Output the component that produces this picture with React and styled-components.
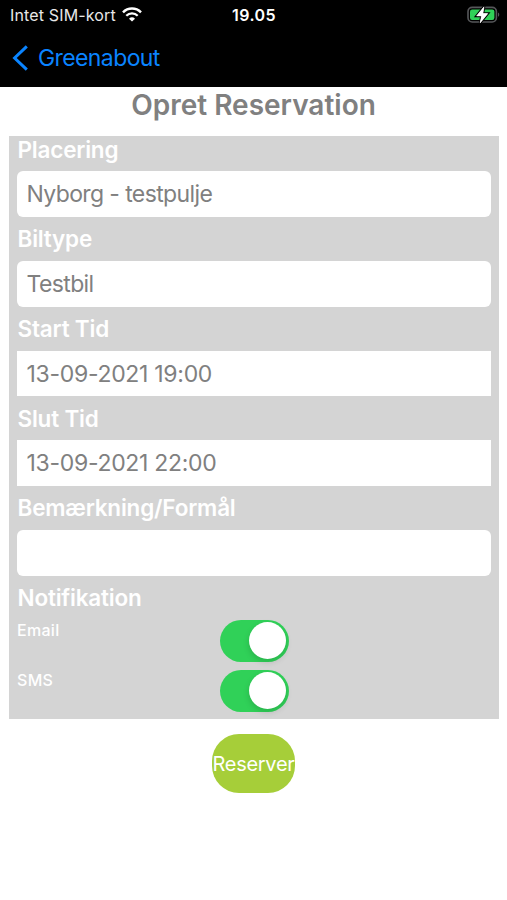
import React, { useState } from "react";
import styled, { createGlobalStyle } from "styled-components";

const fields = [
  { label: "Placering", value: "Nyborg - testpulje", rounded: true },
  { label: "Biltype", value: "Testbil", rounded: true },
  { label: "Start Tid", value: "13-09-2021 19:00", rounded: false },
  { label: "Slut Tid", value: "13-09-2021 22:00", rounded: false },
  { label: "Bemærkning/Formål", value: "", rounded: true },
];

function WifiIcon() {
  return (
    <svg width="20" height="15" viewBox="0 0 20 15" fill="none">
      <path d="M1 5.3a12.8 12.8 0 0 1 18 0" stroke="#fff" strokeWidth="2.5" />
      <path d="M4.3 8.8a8.1 8.1 0 0 1 11.4 0" stroke="#fff" strokeWidth="2.3" />
      <path d="M10 14.6 7 11.7a4.3 4.3 0 0 1 6 0z" fill="#fff" />
    </svg>
  );
}

function BatteryIcon() {
  return (
    <svg width="34" height="18" viewBox="0 0 34 18" fill="none">
      <rect x="2" y="1.4" width="28.4" height="14.6" rx="4.2" stroke="#56575a" strokeWidth="1.6" />
      <path d="M32 6.6c1.7.6 1.7 3.6 0 4.2z" fill="#56575a" />
      <rect x="4" y="3.4" width="24.4" height="10.6" rx="2.2" fill="#30d158" />
      <path
        d="M18 .8 10.6 9.9h4.9l-1.4 7.1 7.7-9.4h-4.9z"
        fill="#fff"
        stroke="#000"
        strokeWidth="2.6"
        paintOrder="stroke"
      />
      <path
        d="M18 .8 10.6 9.9h4.9l-1.4 7.1 7.7-9.4h-4.9z"
        fill="#fff"
        stroke="#fff"
        strokeWidth="0.5"
        strokeLinejoin="round"
      />
    </svg>
  );
}

function App() {
  const [notify, setNotify] = useState({ Email: true, SMS: true });

  const toggle = (name) => {
    setNotify({ ...notify, [name]: !notify[name] });
  };

  return (
    <>
      <GlobalStyle />
      <Screen>
        <TopBar>
          <StatusBar>
            <Carrier>
              <span>Intet SIM-kort</span>
              <WifiIcon />
            </Carrier>
            <Clock>19.05</Clock>
            <Battery>
              <BatteryIcon />
            </Battery>
          </StatusBar>
          <BackButton>
            <svg width="16" height="26" viewBox="0 0 16 26" fill="none">
              <path d="M14.8 1.4 2.6 13l12.2 11.6" stroke="#0a84ff" strokeWidth="3" />
            </svg>
            <span>Greenabout</span>
          </BackButton>
        </TopBar>

        <Title>Opret Reservation</Title>

        <Form>
          {fields.map(({ label, value, rounded }) => (
            <React.Fragment key={label}>
              <Label>{label}</Label>
              <Field $rounded={rounded}>{value}</Field>
            </React.Fragment>
          ))}
          <Label>Notifikation</Label>
          {Object.keys(notify).map((name) => (
            <SwitchRow key={name}>
              <SwitchLabel>{name}</SwitchLabel>
              <Switch
                role="switch"
                aria-label={name}
                aria-checked={notify[name]}
                $on={notify[name]}
                onClick={() => toggle(name)}
              >
                <Knob />
              </Switch>
            </SwitchRow>
          ))}
        </Form>

        <SubmitButton>Reserver</SubmitButton>
      </Screen>
    </>
  );
}

export default App;

const GlobalStyle = createGlobalStyle`
  * {
    box-sizing: border-box;
  }

  body {
    margin: 0;
    background: #fff;
    font-family: Inter, "Liberation Sans", sans-serif;
  }

  button {
    font-family: inherit;
    border: none;
    padding: 0;
    cursor: pointer;
  }

  svg {
    display: block;
    flex-shrink: 0;
  }
`;

const Screen = styled.div`
  width: 507px;
  height: 900px;
  display: flex;
  flex-direction: column;
  overflow: hidden;
  background: #fff;
`;

const TopBar = styled.header`
  height: 87px;
  flex-shrink: 0;
  background: #000;
`;

const StatusBar = styled.div`
  height: 29px;
  display: grid;
  grid-template-columns: 1fr auto 1fr;
  align-items: center;
  padding: 0 7px 0 10px;
  color: #fff;
`;

const Carrier = styled.div`
  display: flex;
  align-items: center;
  gap: 6px;
  font-size: 16px;
  letter-spacing: 0.15px;
  color: #e8e8e8;
`;

const Clock = styled.div`
  margin-right: 2px;
  font-size: 16px;
  font-weight: 600;
  letter-spacing: 0.4px;
`;

const Battery = styled.div`
  display: flex;
  justify-content: flex-end;
`;

const BackButton = styled.button`
  height: 57px;
  display: flex;
  align-items: center;
  gap: 10px;
  padding-left: 12px;
  background: none;
  color: #0a84ff;
  font-size: 23px;
  letter-spacing: -0.6px;
`;

const Title = styled.h1`
  margin: 0;
  height: 48.8px;
  flex-shrink: 0;
  font-size: 28px;
  font-weight: 600;
  line-height: 37px;
  text-align: center;
  color: #808080;
`;

const Form = styled.form`
  margin: 0 8px 0 9px;
  padding: 0 8px 7.5px;
  display: flex;
  flex-direction: column;
  background: #d4d4d4;
`;

const Label = styled.label`
  height: 27.15px;
  margin-bottom: 8.5px;
  padding-left: 0.5px;
  font-size: 22.5px;
  font-weight: 600;
  letter-spacing: -0.2px;
  line-height: 27px;
  color: #fff;
`;

const Field = styled.div`
  height: 45.5px;
  margin-bottom: 8.5px;
  padding: 0 9.5px;
  border-radius: ${(props) => (props.$rounded ? "6px" : "0")};
  background: #fff;
  color: #808080;
  font-size: 23px;
  letter-spacing: ${(props) => (props.$rounded ? "-0.62px" : "-0.3px")};
  line-height: 47px;
`;

const SwitchRow = styled.div`
  display: grid;
  grid-template-columns: 202.5px auto;
  justify-content: start;

  & + & {
    margin-top: 8px;
  }
`;

const SwitchLabel = styled.span`
  font-size: 16px;
  font-weight: 500;
  letter-spacing: 0.3px;
  line-height: 20px;
  color: #fff;
`;

const Switch = styled.div`
  width: 69px;
  height: 42px;
  padding: 2.5px;
  display: flex;
  justify-content: ${(props) => (props.$on ? "flex-end" : "flex-start")};
  border-radius: 21px;
  background: ${(props) => (props.$on ? "#30d158" : "#e9e9ea")};
  cursor: pointer;
`;

const Knob = styled.span`
  width: 37px;
  height: 37px;
  border-radius: 50%;
  background: #fff;
  box-shadow: 0 3px 6px rgba(0, 0, 0, 0.15);
`;

const SubmitButton = styled.button`
  width: 83px;
  height: 59px;
  margin: 15px auto 0;
  display: flex;
  align-items: center;
  justify-content: center;
  border-radius: 27px;
  background: #a6ce39;
  color: #fff;
  font-size: 20px;
  letter-spacing: -0.3px;
`;
